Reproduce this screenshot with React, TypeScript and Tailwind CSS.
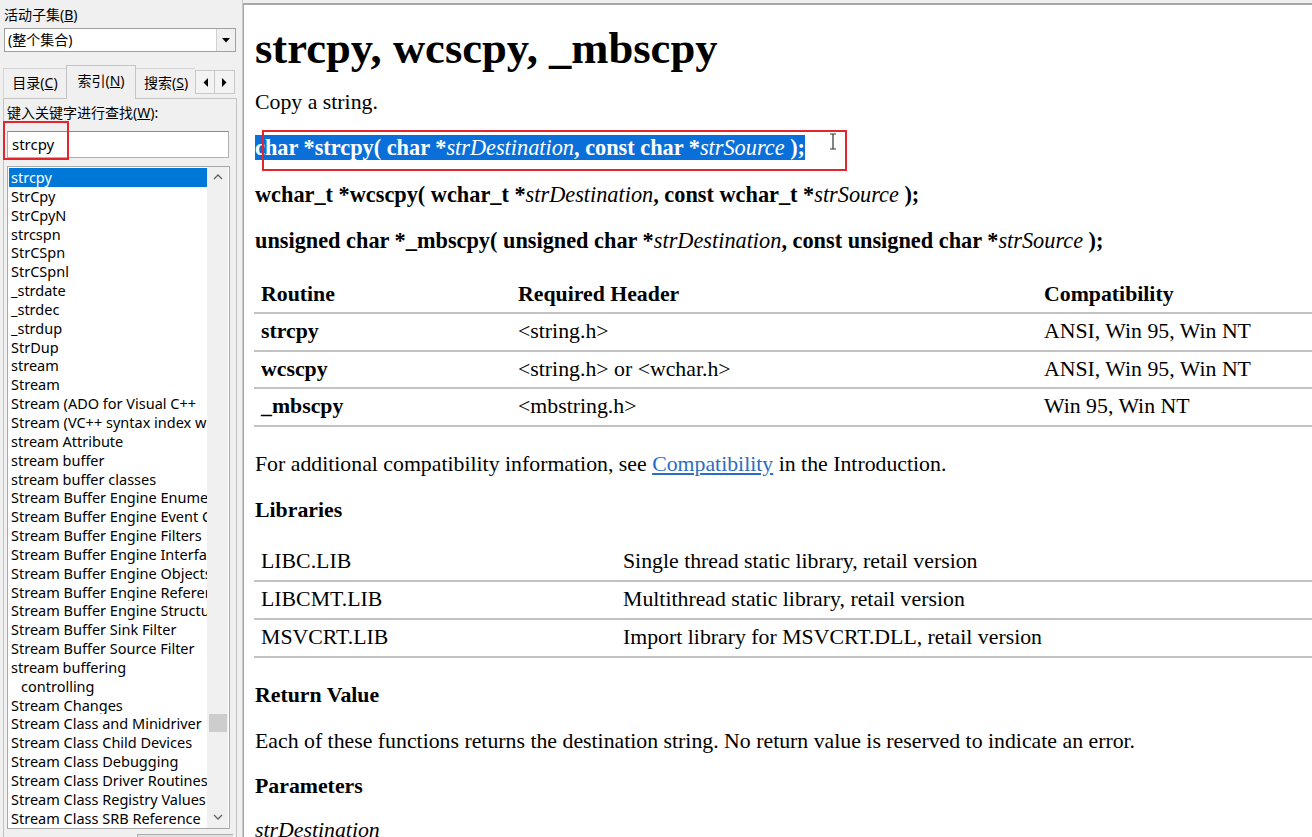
import React from "react";

const items: { t: string; indent?: boolean }[] = [
  { t: "strcpy" },
  { t: "StrCpy" },
  { t: "StrCpyN" },
  { t: "strcspn" },
  { t: "StrCSpn" },
  { t: "StrCSpnl" },
  { t: "_strdate" },
  { t: "_strdec" },
  { t: "_strdup" },
  { t: "StrDup" },
  { t: "stream" },
  { t: "Stream" },
  { t: "Stream (ADO for Visual C++" },
  { t: "Stream (VC++ syntax index w" },
  { t: "stream Attribute" },
  { t: "stream buffer" },
  { t: "stream buffer classes" },
  { t: "Stream Buffer Engine Enumer" },
  { t: "Stream Buffer Engine Event C" },
  { t: "Stream Buffer Engine Filters" },
  { t: "Stream Buffer Engine Interfac" },
  { t: "Stream Buffer Engine Objects" },
  { t: "Stream Buffer Engine Referen" },
  { t: "Stream Buffer Engine Structu" },
  { t: "Stream Buffer Sink Filter" },
  { t: "Stream Buffer Source Filter" },
  { t: "stream buffering" },
  { t: "controlling", indent: true },
  { t: "Stream Changes" },
  { t: "Stream Class and Minidriver" },
  { t: "Stream Class Child Devices" },
  { t: "Stream Class Debugging" },
  { t: "Stream Class Driver Routines" },
  { t: "Stream Class Registry Values" },
  { t: "Stream Class SRB Reference" },
];

function Tri({ dir }: { dir: "left" | "right" | "down" }) {
  if (dir === "down")
    return (
      <svg width="8" height="5" viewBox="0 0 8 5">
        <path d="M0 0 H8 L4 4.5 Z" fill="#000" />
      </svg>
    );
  if (dir === "left")
    return (
      <svg width="5" height="9" viewBox="0 0 5 9">
        <path d="M5 0 V9 L0.5 4.5 Z" fill="#000" />
      </svg>
    );
  return (
    <svg width="5" height="9" viewBox="0 0 5 9">
      <path d="M0 0 V9 L4.5 4.5 Z" fill="#000" />
    </svg>
  );
}

function LeftPanel() {
  return (
    <div className="w-[237px] shrink-0 h-full flex flex-col pl-[3px] font-['Noto_Sans','Noto_Sans_CJK_SC',sans-serif] text-black text-[14px]">
      <div className="mt-[5px] h-[20px] leading-[20px] pl-[1px]">
        活动子集(<span className="underline">B</span>)
      </div>
      <div className="mt-[3px] ml-[1px] w-[232px] h-[24px] bg-white border border-[#a0a0a0] flex items-center">
        <div className="flex-1 pl-[3px] leading-[22px]">(整个集合)</div>
        <div className="w-[19px] h-[22px] bg-[#f0f0f0] border-l border-[#d0d0d0] flex items-center justify-center">
          <Tri dir="down" />
        </div>
      </div>
      <div className="mt-[12px] h-[34px] flex items-end relative z-10">
        <div className="w-[63px] h-[29px] border-t border-l border-[#d4d4d4] flex items-center justify-center mb-[1px] pb-[2px]">
          目录(<span className="underline">C</span>)
        </div>
        <div className="w-[70px] h-[34px] border-t border-l border-r border-[#c4c4c4] bg-[#f0f0f0] flex items-center justify-center pb-[4px] -mb-px">
          索引(<span className="underline">N</span>)
        </div>
        <div className="w-[59px] h-[29px] border-t border-[#d4d4d4] flex items-center pl-[8px] mb-[1px] pb-[2px] overflow-hidden whitespace-nowrap">
          搜索(<span className="underline">S</span>)
        </div>
        <div className="flex mb-[4px] h-[24px]">
          <div className="w-[20px] h-[24px] border border-[#c8c8c8] bg-[#f3f3f3] flex items-center justify-center">
            <Tri dir="left" />
          </div>
          <div className="w-[20px] h-[24px] border border-l-0 border-[#c8c8c8] bg-[#f3f3f3] flex items-center justify-center">
            <Tri dir="right" />
          </div>
        </div>
      </div>
      <div className="w-[234px] flex-1 border-t border-l border-r border-[#c4c4c4] flex flex-col pl-[2px]">
        <div className="mt-[4px] h-[20px] leading-[20px] pl-[1px]">
          键入关键字进行查找(<span className="underline">W</span>):
        </div>
        <div className="mt-[8px] ml-[1px] w-[222px] h-[27px] bg-white border border-[#b0b0b0] border-t-[#8a8a8a] flex items-center pl-[4px] text-[15px]">
          strcpy
        </div>
        <div className="mt-[8px] ml-[1px] w-[223px] h-[663px] bg-white border border-[#a8a8a8] flex overflow-hidden">
          <div className="w-[199px] pt-[1px] pl-[1px] text-[14.5px]">
            {items.map((it, i) => (
              <div
                key={i}
                className={
                  "h-[18.85px] leading-[18.85px] whitespace-nowrap overflow-hidden " +
                  (i === 0 ? "bg-[#0078d7] text-white pl-[2px]" : it.indent ? "pl-[12px]" : "pl-[2px]")
                }
              >
                {it.t}
              </div>
            ))}
          </div>
          <div className="w-[21px] bg-[#f0f0f0] flex flex-col items-center relative">
            <div className="h-[20px] flex items-center justify-center">
              <svg width="10" height="6" viewBox="0 0 10 6">
                <path d="M1 5 L5 1 L9 5" fill="none" stroke="#606060" strokeWidth="1.3" />
              </svg>
            </div>
            <div className="flex-1 w-full flex flex-col items-center">
              <div className="mt-[527px] w-[18px] h-[18px] bg-[#cdcdcd]" />
            </div>
            <div className="h-[22px] flex items-center justify-center">
              <svg width="10" height="6" viewBox="0 0 10 6">
                <path d="M1 1 L5 5 L9 1" fill="none" stroke="#606060" strokeWidth="1.3" />
              </svg>
            </div>
          </div>
        </div>
        <div className="mt-[5px] ml-[131px] w-[96px] flex-1 border-t border-l border-[#adadad] bg-[#e1e1e1]" />
      </div>
    </div>
  );
}

function Sig({ children, highlight }: { children: React.ReactNode; highlight?: boolean }) {
  return (
    <div className="h-[24px] leading-[24px] text-[22.3px] font-bold whitespace-nowrap">
      {highlight ? <span className="bg-[#0a6fd8] text-white">{children}</span> : children}
    </div>
  );
}

function RightPane() {
  const rowLine = "border-b-2 border-[#c2c2c2]";
  return (
    <div className="flex-1 min-w-0 h-full flex flex-col pt-[3px]">
      <div className="flex-1 bg-white border-t-2 border-l border-[#a8a8a8] overflow-hidden font-['Liberation_Serif',serif] text-black text-[21.8px]">
        <div className="pl-[11px] w-[1200px]">
          <h1 className="mt-[19px] h-[48px] leading-[48px] text-[44.6px] font-bold whitespace-nowrap">
            strcpy, wcscpy, _mbscpy
          </h1>
          <p className="mt-[18px] h-[24px] leading-[24px]">Copy a string.</p>
          <div className="mt-[22px]">
            <Sig highlight>
              char *strcpy( char *<i className="font-normal">strDestination</i>, const char *
              <i className="font-normal">strSource</i> );
            </Sig>
          </div>
          <div className="mt-[23px]">
            <Sig>
              wchar_t *wcscpy( wchar_t *<i className="font-normal">strDestination</i>, const wchar_t *
              <i className="font-normal">strSource</i> );
            </Sig>
          </div>
          <div className="mt-[22px]">
            <Sig>
              unsigned char *_mbscpy( unsigned char *<i className="font-normal">strDestination</i>, const unsigned char *
              <i className="font-normal">strSource</i> );
            </Sig>
          </div>
          <table className="mt-[21px] -ml-[1px] w-[1100px] border-collapse">
            <colgroup>
              <col className="w-[257px]" />
              <col className="w-[526px]" />
              <col />
            </colgroup>
            <thead>
              <tr className={rowLine}>
                <th className="h-[39px] text-left font-bold pl-[7px] p-0 pt-[2px]">Routine</th>
                <th className="h-[39px] text-left font-bold pl-[7px] p-0 pt-[2px]">Required Header</th>
                <th className="h-[39px] text-left font-bold pl-[7px] p-0 pt-[2px]">Compatibility</th>
              </tr>
            </thead>
            <tbody>
              {[
                ["strcpy", "<string.h>", "ANSI, Win 95, Win NT"],
                ["wcscpy", "<string.h> or <wchar.h>", "ANSI, Win 95, Win NT"],
                ["_mbscpy", "<mbstring.h>", "Win 95, Win NT"],
              ].map((r, i) => (
                <tr key={i} className={rowLine}>
                  <td className="h-[37.5px] pl-[7px] p-0 font-bold">{r[0]}</td>
                  <td className="h-[37.5px] pl-[7px] p-0">{r[1]}</td>
                  <td className="h-[37.5px] pl-[7px] p-0">{r[2]}</td>
                </tr>
              ))}
            </tbody>
          </table>
          <p className="mt-[25px] h-[24px] leading-[24px] whitespace-nowrap">
            For additional compatibility information, see{" "}
            <span className="text-[#2b6cc4] underline decoration-[#2b6cc4]">Compatibility</span> in the Introduction.
          </p>
          <p className="mt-[22px] h-[24px] leading-[24px] font-bold">Libraries</p>
          <table className="mt-[21px] -ml-[1px] w-[1100px] border-collapse">
            <colgroup>
              <col className="w-[362px]" />
              <col />
            </colgroup>
            <tbody>
              {[
                ["LIBC.LIB", "Single thread static library, retail version"],
                ["LIBCMT.LIB", "Multithread static library, retail version"],
                ["MSVCRT.LIB", "Import library for MSVCRT.DLL, retail version"],
              ].map((r, i) => (
                <tr key={i} className={rowLine}>
                  <td className="h-[38px] pl-[7px] p-0">{r[0]}</td>
                  <td className="h-[38px] pl-[7px] p-0">{r[1]}</td>
                </tr>
              ))}
            </tbody>
          </table>
          <p className="mt-[25px] h-[24px] leading-[24px] font-bold">Return Value</p>
          <p className="mt-[22px] h-[24px] leading-[24px] whitespace-nowrap">
            Each of these functions returns the destination string. No return value is reserved to indicate an error.
          </p>
          <p className="mt-[21px] h-[24px] leading-[24px] font-bold">Parameters</p>
          <p className="mt-[20px] h-[24px] leading-[24px] italic">strDestination</p>
        </div>
      </div>
    </div>
  );
}

export default function App() {
  return (
    <div className="w-[1312px] h-[837px] overflow-hidden bg-[#f0f0f0] flex relative">
      <LeftPanel />
      <div className="w-[6px] shrink-0 h-full border-r border-[#c8c8c8]" />
      <RightPane />
      {/* red annotation boxes */}
      <div className="absolute left-[3px] top-[121px] w-[66px] h-[39px] border-2 border-[#e3262b]" />
      <div className="absolute left-[262px] top-[130px] w-[585px] h-[41px] border-2 border-[#e3262b]" />
      {/* text cursor */}
      <svg className="absolute left-[829px] top-[133px]" width="8" height="17" viewBox="0 0 8 17">
        <path d="M1 1 H7 M4 1 V16 M1 16 H7" fill="none" stroke="#333" strokeWidth="1.2" />
      </svg>
    </div>
  );
}
